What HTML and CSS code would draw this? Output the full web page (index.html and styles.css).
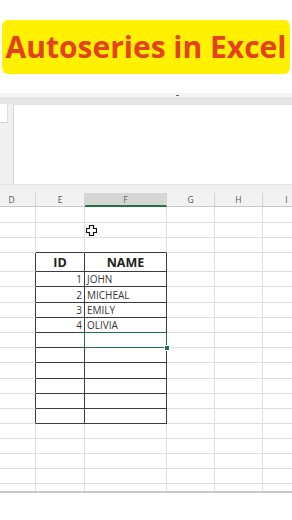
FILE: index.html
```html
<!DOCTYPE html>
<html>
<head>
<meta charset="utf-8">
<link rel="stylesheet" href="styles.css">
</head>
<body>
<div class="page">
  <div class="title-wrap">
    <div class="title">Autoseries in Excel</div>
  </div>
  <div class="ribbon"><span class="tick"></span></div>
  <div class="formula">
    <div class="namecol"><div class="namebox"></div></div>
    <div class="fbox"></div>
  </div>
  <div class="graygap"></div>
  <div class="colhead">
    <div class="ch">D</div><div class="ch">E</div><div class="ch act">F</div><div class="ch">G</div><div class="ch">H</div><div class="ch">I</div>
  </div>
  <div class="sheet">
    <div class="row h16"><div class="c"></div><div class="c"></div><div class="c"></div><div class="c"></div><div class="c"></div><div class="c"></div></div>
    <div class="row h15"><div class="c"></div><div class="c"></div><div class="c cur-host"><svg class="cursor" width="11" height="11" viewBox="0 0 11 11"><path d="M3.5 0.5h4v3h3v4h-3v3h-4v-3h-3v-4h3z" fill="#fff" stroke="#111" stroke-width="1.2"/></svg></div><div class="c"></div><div class="c"></div><div class="c"></div></div>
    <div class="row h15"><div class="c"></div><div class="c tb"></div><div class="c tb"></div><div class="c"></div><div class="c"></div><div class="c"></div></div>
    <div class="row h19"><div class="c tr"></div><div class="c t th">ID</div><div class="c t th">NAME</div><div class="c"></div><div class="c"></div><div class="c"></div></div>
    <div class="row h15"><div class="c tr"></div><div class="c t num">1</div><div class="c t txt">JOHN</div><div class="c"></div><div class="c"></div><div class="c"></div></div>
    <div class="row h16"><div class="c tr"></div><div class="c t num">2</div><div class="c t txt">MICHEAL</div><div class="c"></div><div class="c"></div><div class="c"></div></div>
    <div class="row h15"><div class="c tr"></div><div class="c t num">3</div><div class="c t txt">EMILY</div><div class="c"></div><div class="c"></div><div class="c"></div></div>
    <div class="row h15"><div class="c tr"></div><div class="c t num">4</div><div class="c t txt">OLIVIA</div><div class="c"></div><div class="c"></div><div class="c"></div></div>
    <div class="row h15"><div class="c tr"></div><div class="c t"></div><div class="c t sel"><span class="handle"></span></div><div class="c"></div><div class="c"></div><div class="c"></div></div>
    <div class="row h15"><div class="c tr"></div><div class="c t"></div><div class="c t"></div><div class="c"></div><div class="c"></div><div class="c"></div></div>
    <div class="row h16"><div class="c tr"></div><div class="c t"></div><div class="c t"></div><div class="c"></div><div class="c"></div><div class="c"></div></div>
    <div class="row h15"><div class="c tr"></div><div class="c t"></div><div class="c t"></div><div class="c"></div><div class="c"></div><div class="c"></div></div>
    <div class="row h15"><div class="c tr"></div><div class="c t"></div><div class="c t"></div><div class="c"></div><div class="c"></div><div class="c"></div></div>
    <div class="row h15"><div class="c tr"></div><div class="c t"></div><div class="c t"></div><div class="c"></div><div class="c"></div><div class="c"></div></div>
    <div class="row h15"><div class="c"></div><div class="c"></div><div class="c"></div><div class="c"></div><div class="c"></div><div class="c"></div></div>
    <div class="row h15"><div class="c"></div><div class="c"></div><div class="c"></div><div class="c"></div><div class="c"></div><div class="c"></div></div>
    <div class="row h15"><div class="c"></div><div class="c"></div><div class="c"></div><div class="c"></div><div class="c"></div><div class="c"></div></div>
    <div class="row h15"><div class="c"></div><div class="c"></div><div class="c"></div><div class="c"></div><div class="c"></div><div class="c"></div></div>
    <div class="row h7 last"><div class="c"></div><div class="c"></div><div class="c"></div><div class="c"></div><div class="c"></div><div class="c"></div></div>
  </div>
  <div class="bottomline"></div>
</div>
</body>
</html>
```
FILE: styles.css
```css
html, body {
  margin: 0;
  padding: 0;
  background: #ffffff;
}
body {
  width: 292px;
  height: 520px;
  overflow: hidden;
  font-family: "Open Sans", "Liberation Sans", sans-serif;
}
.page {
  width: 292px;
  overflow: hidden;
}
.title-wrap {
  padding: 20px 2px 19px 2px;
}
.title {
  height: 54px;
  background: #fff100;
  border-radius: 6px;
  display: flex;
  align-items: center;
  justify-content: center;
  color: #e4421e;
  font-weight: 700;
  font-size: 30px;
  line-height: 1;
  padding-bottom: 1px;
  box-sizing: border-box;
  white-space: nowrap;
}
.ribbon {
  height: 7px;
  border-top: 4px solid #f4f4f4;
  background: #e5e5e5;
  display: flex;
  padding-left: 176px;
}
.tick {
  display: block;
  width: 3px;
  height: 1px;
  margin-top: -2px;
  background: #666;
}
.formula {
  height: 80px;
  display: flex;
  background: #f0f0f0;
}
.namecol {
  width: 8px;
  flex-shrink: 0;
  margin-right: 5px;
  background: #f0f0f0;
}
.namebox {
  height: 18px;
  background: #ffffff;
  border-bottom: 1px solid #d2d2d2;
  border-right: 1px solid #e0e0e0;
}
.fbox {
  flex: 1;
  background: #ffffff;
  border-left: 1px solid #d6d6d6;
  border-top: 1px solid #e2e2e2;
}
.graygap {
  height: 9px;
  background: #f0f0f0;
  border-top: 1px solid #e4e4e4;
  box-sizing: border-box;
}
.colhead {
  display: flex;
  margin-left: -12px;
  height: 14px;
  background: #f2f2f2;
}
.ch {
  flex-shrink: 0;
  box-sizing: border-box;
  height: 14px;
  border-right: 1px solid #d4d4d4;
  border-bottom: 1px solid #c8c8c8;
  font-size: 8.5px;
  color: #555;
  display: flex;
  align-items: center;
  justify-content: center;
}
.ch.act {
  background: #d6d6d6;
  border-bottom: 2px solid #217346;
  color: #666;
}
.sheet {
  margin-left: -12px;
}
.row {
  display: flex;
}
.h15 { height: 15px; }
.h16 { height: 16px; }
.h19 { height: 19px; }
.h7 { height: 7px; }
.ch:nth-child(1), .c:nth-child(1) { width: 48px; }
.ch:nth-child(2), .c:nth-child(2) { width: 49px; }
.ch:nth-child(3), .c:nth-child(3) { width: 82px; }
.ch:nth-child(4), .c:nth-child(4) { width: 48px; }
.ch:nth-child(5), .c:nth-child(5) { width: 48px; }
.ch:nth-child(6), .c:nth-child(6) { width: 48px; }
.c {
  flex-shrink: 0;
  box-sizing: border-box;
  height: 100%;
  border-right: 1px solid #dedede;
  border-bottom: 1px solid #dedede;
  font-size: 10px;
  color: #363636;
  display: flex;
  align-items: center;
}
.last .c {
  border-bottom: none;
}
.c.tb {
  border-bottom-color: #3c3c3c;
}
.c.tr {
  border-right-color: #3c3c3c;
}
.c.t {
  border-right-color: #3c3c3c;
  border-bottom-color: #3c3c3c;
}
.c.th {
  justify-content: center;
  font-weight: 700;
  font-size: 12.5px;
  color: #222;
}
.c.num {
  justify-content: flex-end;
  padding-right: 2px;
}
.c.txt {
  padding-left: 2px;
}
.cur-host {
  position: relative;
}
.cursor {
  position: absolute;
  left: 1px;
  top: 2px;
}
.sel {
  position: relative;
}
.sel::before {
  content: "";
  position: absolute;
  left: -1px;
  top: -1px;
  right: -1px;
  bottom: -1px;
  border: 1.5px solid #217346;
}
.handle {
  position: absolute;
  right: -3px;
  bottom: -3px;
  width: 4px;
  height: 4px;
  background: #217346;
  border: 1px solid #fff;
  box-sizing: content-box;
  margin: -1px;
}
.bottomline {
  height: 2px;
  background: #c8c8c8;
}
```
